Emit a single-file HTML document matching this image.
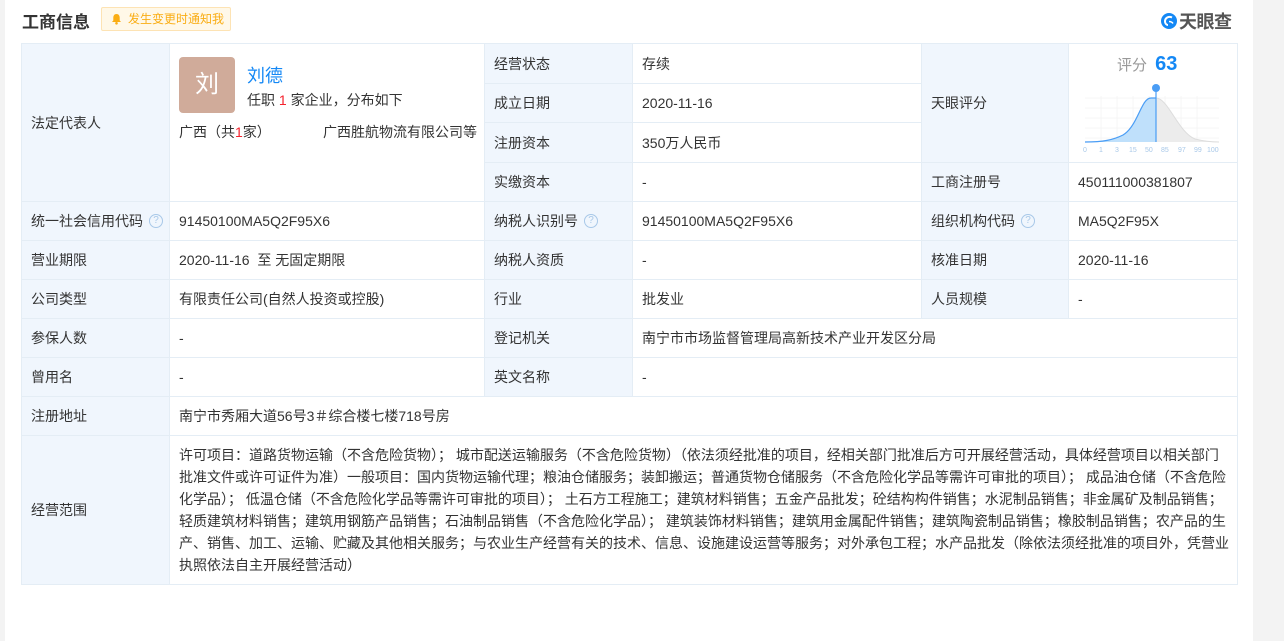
<!DOCTYPE html>
<html><head><meta charset="utf-8"><style>
*{margin:0;padding:0;box-sizing:border-box}
body{width:1284px;height:641px;background:#f3f3f3;font-family:"Liberation Sans","Noto Sans CJK SC",sans-serif;color:#333;font-size:14px;position:relative;overflow:hidden}
.card{position:absolute;left:5px;top:0;width:1248px;height:641px;background:#fff}
.tbl{position:absolute;left:21px;top:43px;width:1217px;height:542px;background:#e4edf5}
.c{position:absolute;background:#fff;display:flex;align-items:center;padding-left:9px;white-space:nowrap}
.l{background:#f0f6fd}
.q{display:inline-block;width:14px;height:14px;border:1px solid #a8c8e8;border-radius:50%;color:#a8c8e8;font-size:10px;line-height:12px;text-align:center;margin-left:6px}
</style></head><body>
<div class="card"></div>
<div style="position:absolute;left:22px;top:8px;font-size:17px;font-weight:bold;color:#333">工商信息</div>
<div style="position:absolute;left:101px;top:7px;width:130px;height:24px;background:#fff8e8;border:1px solid #fde3b4;border-radius:2px;color:#faad14;font-size:12px;line-height:22px;padding-left:26px">发生变更时通知我
<svg style="position:absolute;left:9px;top:5px" width="11" height="12" viewBox="0 0 11 12"><path d="M5.5 1C3.3 1 2.3 2.8 2.3 4.7V7.5L1 9H10L8.7 7.5V4.7C8.7 2.8 7.7 1 5.5 1Z" fill="#faad14"/><circle cx="5.5" cy="10.3" r="1.3" fill="#faad14"/></svg></div>
<div style="position:absolute;left:1160px;top:8px;display:flex;align-items:center">
<svg width="18" height="18" viewBox="0 0 18 18"><circle cx="9" cy="9" r="8" fill="#1488f5"/><path d="M12 5.5C9 4 5 5.5 5 9.5c0 2 1.5 3.5 3 3.5" stroke="#fff" stroke-width="2" fill="none"/><path d="M9 9.5c1.5 0 3 .5 4 2" stroke="#fff" stroke-width="1.5" fill="none"/></svg>
<span style="font-size:18px;font-weight:bold;color:#555;margin-left:1px;letter-spacing:-0.5px">天眼查</span></div>

<div class="tbl">
<div class="c l" style="left:1px;top:1px;width:147px;height:157px">法定代表人</div>
<div class="c" style="left:149px;top:1px;width:314px;height:157px;display:block;padding:0">
 <div style="position:absolute;left:9px;top:13px;width:56px;height:56px;background:#d0ab9a;border-radius:4px;color:#fff;font-size:24px;text-align:center;line-height:56px">刘</div>
 <div style="position:absolute;left:77px;top:18px;font-size:18px;color:#1488f5">刘德</div>
 <div style="position:absolute;left:77px;top:46px;font-size:14px">任职 <span style="color:#f5222d">1</span> 家企业，分布如下</div>
 <div style="position:absolute;left:9px;top:78px">广西（共<span style="color:#f5222d">1</span>家）</div>
 <div style="position:absolute;left:153px;top:78px">广西胜航物流有限公司等</div>
</div>
<div class="c l" style="left:464px;top:1px;width:147px;height:39px">经营状态</div>
<div class="c" style="left:612px;top:1px;width:288px;height:39px">存续</div>
<div class="c l" style="left:464px;top:41px;width:147px;height:38px">成立日期</div>
<div class="c" style="left:612px;top:41px;width:288px;height:38px">2020-11-16</div>
<div class="c l" style="left:464px;top:80px;width:147px;height:39px">注册资本</div>
<div class="c" style="left:612px;top:80px;width:288px;height:39px">350万人民币</div>
<div class="c l" style="left:464px;top:120px;width:147px;height:38px">实缴资本</div>
<div class="c" style="left:612px;top:120px;width:288px;height:38px">-</div>
<div class="c l" style="left:901px;top:1px;width:146px;height:118px">天眼评分</div>
<div class="c" style="left:1048px;top:1px;width:168px;height:118px;display:block;padding:0">
 <div style="position:absolute;left:48px;top:9px;font-size:15px;color:#999">评分 <span style="color:#1488f5;font-weight:bold;font-size:20px;margin-left:4px">63</span></div>
 <svg style="position:absolute;left:14px;top:34px" width="140" height="76" viewBox="0 0 140 76">
  <g stroke="#eee" stroke-width="0.5"><path d="M2 20H136M2 30H136M2 40H136M2 50H136M2 60H136"/><path d="M18 18V64M34 18V64M50 18V64M66 18V64M82 18V64M98 18V64M114 18V64"/></g>
  <path d="M73 64V20C85 20 95 54 112 61C120 63 130 64 136 64Z" fill="#ececec"/>
  <path d="M2 64C20 64 30 62 40 57C55 48 58 20 68 20H73V64Z" fill="#bfe0fb"/>
  <path d="M2 64C20 64 30 62 40 57C55 48 58 20 68 20H73" stroke="#4a9df5" stroke-width="1.2" fill="none"/>
  <path d="M73 20C85 20 95 54 112 61C120 63 130 64 136 64" stroke="#ddd" stroke-width="1" fill="none"/>
  <path d="M73 12V64" stroke="#4a9df5" stroke-width="1.2"/>
  <circle cx="73" cy="10" r="4" fill="#4a9df5"/>
  <g font-size="7" fill="#a8c8e8" font-family="Liberation Sans"><text x="0" y="74">0</text><text x="16" y="74">1</text><text x="32" y="74">3</text><text x="46" y="74">15</text><text x="62" y="74">50</text><text x="78" y="74">85</text><text x="95" y="74">97</text><text x="111" y="74">99</text><text x="124" y="74">100</text></g>
 </svg>
</div>
<div class="c l" style="left:901px;top:120px;width:146px;height:38px">工商注册号</div>
<div class="c" style="left:1048px;top:120px;width:168px;height:38px">450111000381807</div>

<div class="c l" style="left:1px;top:159px;width:147px;height:38px">统一社会信用代码<span class="q">?</span></div>
<div class="c" style="left:149px;top:159px;width:314px;height:38px">91450100MA5Q2F95X6</div>
<div class="c l" style="left:464px;top:159px;width:147px;height:38px">纳税人识别号<span class="q">?</span></div>
<div class="c" style="left:612px;top:159px;width:288px;height:38px">91450100MA5Q2F95X6</div>
<div class="c l" style="left:901px;top:159px;width:146px;height:38px">组织机构代码<span class="q">?</span></div>
<div class="c" style="left:1048px;top:159px;width:168px;height:38px">MA5Q2F95X</div>

<div class="c l" style="left:1px;top:198px;width:147px;height:38px">营业期限</div>
<div class="c" style="left:149px;top:198px;width:314px;height:38px">2020-11-16&nbsp;&nbsp;至&nbsp;无固定期限</div>
<div class="c l" style="left:464px;top:198px;width:147px;height:38px">纳税人资质</div>
<div class="c" style="left:612px;top:198px;width:288px;height:38px">-</div>
<div class="c l" style="left:901px;top:198px;width:146px;height:38px">核准日期</div>
<div class="c" style="left:1048px;top:198px;width:168px;height:38px">2020-11-16</div>

<div class="c l" style="left:1px;top:237px;width:147px;height:38px">公司类型</div>
<div class="c" style="left:149px;top:237px;width:314px;height:38px">有限责任公司(自然人投资或控股)</div>
<div class="c l" style="left:464px;top:237px;width:147px;height:38px">行业</div>
<div class="c" style="left:612px;top:237px;width:288px;height:38px">批发业</div>
<div class="c l" style="left:901px;top:237px;width:146px;height:38px">人员规模</div>
<div class="c" style="left:1048px;top:237px;width:168px;height:38px">-</div>

<div class="c l" style="left:1px;top:276px;width:147px;height:38px">参保人数</div>
<div class="c" style="left:149px;top:276px;width:314px;height:38px">-</div>
<div class="c l" style="left:464px;top:276px;width:147px;height:38px">登记机关</div>
<div class="c" style="left:612px;top:276px;width:604px;height:38px">南宁市市场监督管理局高新技术产业开发区分局</div>

<div class="c l" style="left:1px;top:315px;width:147px;height:38px">曾用名</div>
<div class="c" style="left:149px;top:315px;width:314px;height:38px">-</div>
<div class="c l" style="left:464px;top:315px;width:147px;height:38px">英文名称</div>
<div class="c" style="left:612px;top:315px;width:604px;height:38px">-</div>

<div class="c l" style="left:1px;top:354px;width:147px;height:38px">注册地址</div>
<div class="c" style="left:149px;top:354px;width:1067px;height:38px">南宁市秀厢大道56号3＃综合楼七楼718号房</div>

<div class="c l" style="left:1px;top:393px;width:147px;height:148px">经营范围</div>
<div class="c" style="left:149px;top:393px;width:1067px;height:148px;display:block;padding:8px 0 0 9px;line-height:22px;font-size:14px;white-space:nowrap">许可项目：道路货物运输（不含危险货物）；&nbsp;城市配送运输服务（不含危险货物）（依法须经批准的项目，经相关部门批准后方可开展经营活动，具体经营项目以相关部门<br>批准文件或许可证件为准）一般项目：国内货物运输代理；粮油仓储服务；装卸搬运；普通货物仓储服务（不含危险化学品等需许可审批的项目）；&nbsp;成品油仓储（不含危险<br>化学品）；&nbsp;低温仓储（不含危险化学品等需许可审批的项目）；&nbsp;土石方工程施工；建筑材料销售；五金产品批发；砼结构构件销售；水泥制品销售；非金属矿及制品销售；<br>轻质建筑材料销售；建筑用钢筋产品销售；石油制品销售（不含危险化学品）；&nbsp;建筑装饰材料销售；建筑用金属配件销售；建筑陶瓷制品销售；橡胶制品销售；农产品的生<br>产、销售、加工、运输、贮藏及其他相关服务；与农业生产经营有关的技术、信息、设施建设运营等服务；对外承包工程；水产品批发（除依法须经批准的项目外，凭营业<br>执照依法自主开展经营活动）</div>
</div>
</body></html>
